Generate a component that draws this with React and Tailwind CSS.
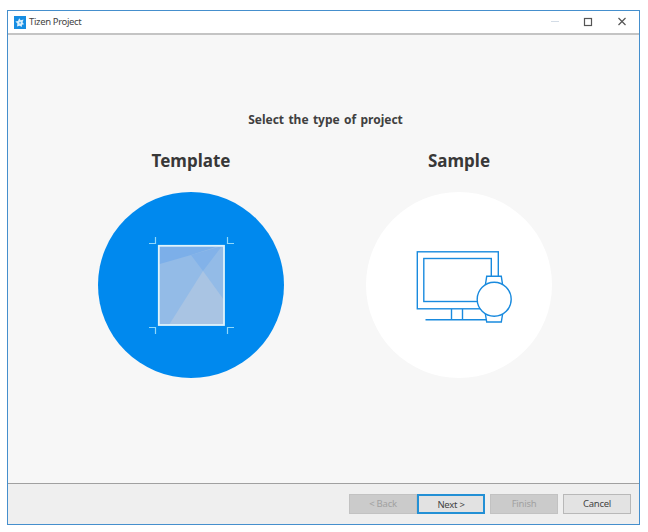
import React from "react";

function TizenLogo() {
  return (
    <svg width="12" height="13" viewBox="0 0 12 13" className="block">
      <rect width="12" height="13" fill="#168de2" />
      <path d="M5.2 2.2 L6.6 4.2 L9.6 3.5 L8.5 6.3 L10 8.2 L8 8.8 L7.8 11 L5.6 9.7 L3 10.4 L3.4 7.6 L1.4 5.6 L4 5 Z" fill="#d9effc" />
      <circle cx="6.1" cy="6.8" r="1" fill="#5cb2ec" />
    </svg>
  );
}

function TitleBar() {
  return (
    <header className="flex h-[22px] shrink-0 items-center bg-white pl-[6px]">
      <TizenLogo />
      <span className="ml-[3px] text-[9.5px] leading-[22px] tracking-[-0.35px] text-[#444]">Tizen Project</span>
      <svg width="90" height="22" viewBox="0 0 90 22" className="ml-auto block" fill="none">
        <path d="M2 10.5H10" stroke="#d3dce6" />
        <rect x="35.5" y="7.5" width="7" height="7" stroke="#555" strokeWidth="1.2" />
        <path d="M69.5 7L76.5 14M76.5 7L69.5 14" stroke="#555" strokeWidth="1.2" />
      </svg>
    </header>
  );
}

function TemplateArt() {
  return (
    <svg width="186" height="186" viewBox="98 192 186 186" className="block" fill="none">
      <rect x="158" y="245" width="66" height="80" fill="#93bbe7" />
      <path d="M158 245H222L191 255L158 264.5Z" fill="#7cafe9" />
      <path d="M222 246L191 255L203 271Z" fill="#82b2e9" />
      <path d="M203 271L224 300V325H169Z" fill="#a9c4e3" />
      <rect x="158.8" y="245.8" width="65.2" height="79.2" stroke="#def3fb" strokeWidth="1.8" />
      <path d="M155.5 237V243.5H149M227.5 237V243.5H234M149 327.5H155.5V334M234 327.5H227.5V334" stroke="#8fd8fb" strokeWidth="1.2" />
    </svg>
  );
}

function SampleArt() {
  return (
    <svg width="186" height="186" viewBox="366 192 186 186" className="block" fill="none" stroke="#198ade" strokeWidth="1.4">
      <rect x="417.3" y="251.8" width="81" height="57" />
      <rect x="423.8" y="258.5" width="67.5" height="43" />
      <path d="M451.5 309V319.5M462.5 309V319.5M425.5 319.8H486" />
      <path d="M485.3 285.5L486.7 276.3H501.3L502.7 285.5" fill="#fff" />
      <path d="M485.3 313.5L486.7 322H501.3L502.7 313.5" fill="#fff" />
      <circle cx="494.2" cy="299.3" r="17" fill="#fff" />
    </svg>
  );
}

function ProjectType({ title, circleClass, children }) {
  return (
    <div className="flex w-[186px] flex-col items-center">
      <h2 className="h-[24px] whitespace-nowrap text-[17px] font-bold leading-[24px] text-[#383838]">{title}</h2>
      <button className={"mt-[19px] size-[186px] overflow-hidden rounded-full " + circleClass}>{children}</button>
    </div>
  );
}

function Footer() {
  const base = "h-[20px] w-[68px] text-[9.5px] tracking-[-0.25px] ";
  return (
    <footer className="flex h-[41px] shrink-0 justify-end border-t border-[#a0a0a0] bg-[#efefef] pr-[8px] pt-[10px]">
      <button className={base + "border border-[#c2c2c2] bg-[#cbcbcb] leading-[18px] text-[#a1a1a1]"}>&lt; Back</button>
      <button className={base + "border-2 border-[#2390d5] bg-[#e2e2e2] leading-[15px] text-[#444]"}>Next &gt;</button>
      <button className={base + "ml-[5px] border border-[#c2c2c2] bg-[#cbcbcb] leading-[18px] text-[#a1a1a1]"}>Finish</button>
      <button className={base + "ml-[5px] border border-[#b8b8b8] bg-[#e3e3e3] leading-[18px] text-[#444]"}>Cancel</button>
    </footer>
  );
}

export default function App() {
  return (
    <div className="h-[532px] w-[648px] overflow-hidden bg-white pl-[7px] pt-[10px] font-['Noto_Sans',sans-serif]">
      <div className="flex h-[515px] w-[633px] flex-col border border-[#458fcd] bg-[#f7f7f7]">
        <TitleBar />
        <main className="flex flex-1 flex-col border-t-2 border-t-[#c4c4c4]">
          <h1 className="mt-[76px] h-[18px] pl-[4px] text-center text-[12px] font-bold leading-[18px] text-[#404040] [word-spacing:1.2px]">Select the type of project</h1>
          <div className="mt-[20px] flex gap-[82px] pl-[90px]">
            <ProjectType title="Template" circleClass="bg-[#0089ee]">
              <TemplateArt />
            </ProjectType>
            <ProjectType title="Sample" circleClass="bg-white">
              <SampleArt />
            </ProjectType>
          </div>
        </main>
        <Footer />
      </div>
    </div>
  );
}
